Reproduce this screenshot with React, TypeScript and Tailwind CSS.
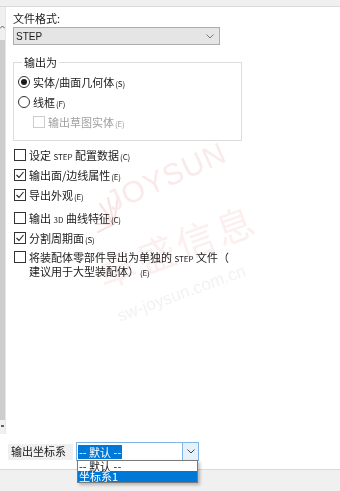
import React from 'react';

const FONT = '"Noto Sans CJK SC", "Microsoft YaHei", "Liberation Sans", sans-serif';

const Mn: React.FC<{ k: string }> = ({ k }) => (
  <span className="text-[8px] ml-[1px] tracking-tight">({k})</span>
);

const Check: React.FC<{ checked?: boolean; disabled?: boolean }> = ({ checked, disabled }) => (
  <span
    className={`flex items-center justify-center w-[12px] h-[12px] shrink-0 border bg-white ${
      disabled ? 'border-[#cccccc]' : 'border-[#333333]'
    }`}
  >
    {checked && (
      <svg width="10" height="10" viewBox="0 0 10 10">
        <path d="M1.5 5 L4 7.5 L8.5 2" fill="none" stroke="#222" strokeWidth="1.1" />
      </svg>
    )}
  </span>
);

const Radio: React.FC<{ checked?: boolean }> = ({ checked }) => (
  <span className="flex items-center justify-center w-[12px] h-[12px] shrink-0 rounded-full border border-[#333333] bg-white">
    {checked && <span className="w-[6px] h-[6px] rounded-full bg-[#1a1a1a]" />}
  </span>
);

const Chevron: React.FC<{ color?: string }> = ({ color = '#555' }) => (
  <svg width="8" height="5" viewBox="0 0 8 5">
    <path d="M0.5 0.5 L4 4 L7.5 0.5" fill="none" stroke={color} strokeWidth="1" />
  </svg>
);

// faint company watermark over the dialog
const Watermark: React.FC = () => (
  <div className="pointer-events-none absolute inset-0 overflow-hidden mix-blend-multiply">
    <svg className="absolute left-[92px] top-[184px]" width="44" height="50" viewBox="0 0 44 50">
      <g stroke="#f8e4e4" strokeWidth="2.2" strokeLinecap="round">
        <path d="M22 40 L6 30" />
        <path d="M22 40 L4 40" />
        <path d="M22 40 L8 20" />
        <path d="M22 40 L16 14" />
        <path d="M22 40 L26 12" />
        <path d="M22 40 L6 48" />
      </g>
    </svg>
    <div
      className="absolute left-[108px] top-[188px] text-[30px] leading-none text-[#fbeaea] font-light tracking-[1px] origin-left -rotate-[24deg]"
      style={{ fontFamily: '"Liberation Sans", sans-serif' }}
    >
      JOYSUN
    </div>
    <div className="absolute left-[98px] top-[255px] text-[38px] leading-none text-[#fcefef] tracking-[4px] origin-left -rotate-[20deg]">
      卓盛信息
    </div>
    <div
      className="absolute left-[118px] top-[308px] text-[17px] leading-none text-[#f2f2f2] origin-left -rotate-[20deg]"
      style={{ fontFamily: '"Liberation Sans", sans-serif' }}
    >
      sw-joysun.com.cn
    </div>
  </div>
);

const Row: React.FC<{ checked?: boolean; className?: string; children: React.ReactNode }> = ({
  checked,
  className = '',
  children,
}) => (
  <div className={`flex items-center gap-[3px] h-[20px] ml-[1px] ${className}`}>
    <Check checked={checked} />
    <span>{children}</span>
  </div>
);

export default function App() {
  return (
    <div
      className="relative w-[340px] h-[491px] bg-white overflow-hidden text-[11px] text-[#1a1a1a]"
      style={{ fontFamily: FONT }}
    >
      <div className="h-[7px] bg-[#f0f0f0] border-b border-[#dadada]" />

      <div className="flex h-[427px]">
        {/* scrollbar (only its right edge is visible) */}
        <div className="flex flex-col w-[6px] border-r border-[#e6e6e6]">
          <div className="h-[33px] bg-[#f0f0f0] relative">
            <svg className="absolute left-0 top-[18px]" width="5" height="4" viewBox="0 0 5 4">
              <path d="M0 3.5 L2.5 1 L5 3.5" fill="none" stroke="#606060" strokeWidth="1" />
            </svg>
          </div>
          <div className="flex-1 bg-[#cdcdcd]" />
          <div className="h-[14px] bg-[#f0f0f0] relative">
            <span className="absolute left-[1px] top-[5px] w-[3px] h-[2px] bg-[#606060]" />
          </div>
        </div>

        <div className="flex-1 pl-[7px] pt-[4px]">
          <div className="leading-[14px]">文件格式:</div>
          <div className="mt-[2px] flex items-center justify-between w-[207px] h-[18px] bg-[#e5e5e5] border border-[#adadad] pl-[2px] pr-[5px]">
            <span className="text-[10px]" style={{ fontFamily: '"Liberation Sans", sans-serif' }}>
              STEP
            </span>
            <Chevron color="#777" />
          </div>

          <fieldset className="mt-[10px] w-[229px] h-[86px] border border-[#dcdcdc] pl-[4px]">
            <legend className="ml-[4px] px-[2px] leading-[14px]">输出为</legend>
            <div className="flex items-center gap-[3px] h-[20px] mt-[3px]">
              <Radio checked />
              <span>
                实体/曲面几何体
                <Mn k="S" />
              </span>
            </div>
            <div className="flex items-center gap-[3px] h-[20px]">
              <Radio />
              <span>
                线框
                <Mn k="F" />
              </span>
            </div>
            <div className="flex items-center gap-[3px] h-[20px] ml-[15px] text-[#a0a0a0]">
              <Check disabled />
              <span>
                输出草图实体
                <Mn k="E" />
              </span>
            </div>
          </fieldset>

          <Row className="mt-[4px]">
            设定 <span className="text-[8px]">STEP</span> 配置数据
            <Mn k="C" />
          </Row>
          <Row checked>
            输出面/边线属性
            <Mn k="E" />
          </Row>
          <Row checked>
            导出外观
            <Mn k="E" />
          </Row>
          <Row className="mt-[3px]">
            输出 <span className="text-[8px]">3D</span> 曲线特征
            <Mn k="C" />
          </Row>
          <Row checked>
            分割周期面
            <Mn k="S" />
          </Row>
          <div className="flex items-start gap-[3px] ml-[1px] mt-[3px] leading-[12px]">
            <Check />
            <span>
              将装配体零部件导出为单独的 <span className="text-[8px]">STEP</span> 文件（
              <br />
              建议用于大型装配体）
              <Mn k="E" />
            </span>
          </div>
        </div>
      </div>

      <div className="flex items-center h-[35px]">
        <div className="ml-[8px] h-[16px] flex items-center bg-[#f0f0f0] pl-[3px] pr-[7px]">输出坐标系</div>
        <div className="relative ml-[3px] flex items-stretch w-[123px] h-[19px] border border-[#7eb4ea] bg-white">
          <div className="flex-1 flex items-center pl-[1px]">
            <span className="bg-[#0078d7] text-white px-[1px] leading-[14px]">-- 默认 --</span>
          </div>
          <div className="w-[16px] flex items-center justify-center bg-[#e5f1fb] border-l border-[#7eb4ea]">
            <Chevron color="#444" />
          </div>
          <div className="absolute left-[0px] top-[17px] w-[121px] border border-[#7a7a7a] bg-white shadow-[2px_2px_3px_rgba(0,0,0,0.25)] z-10">
            <div className="h-[10px] leading-[10px] pl-[1px]">-- 默认 --</div>
            <div className="h-[11px] leading-[11px] pl-[1px] bg-[#0078d7] text-white">坐标系1</div>
          </div>
        </div>
      </div>

      <div className="h-[22px] bg-[#f0f0f0] border-t border-[#dadada]" />

      <Watermark />
    </div>
  );
}
